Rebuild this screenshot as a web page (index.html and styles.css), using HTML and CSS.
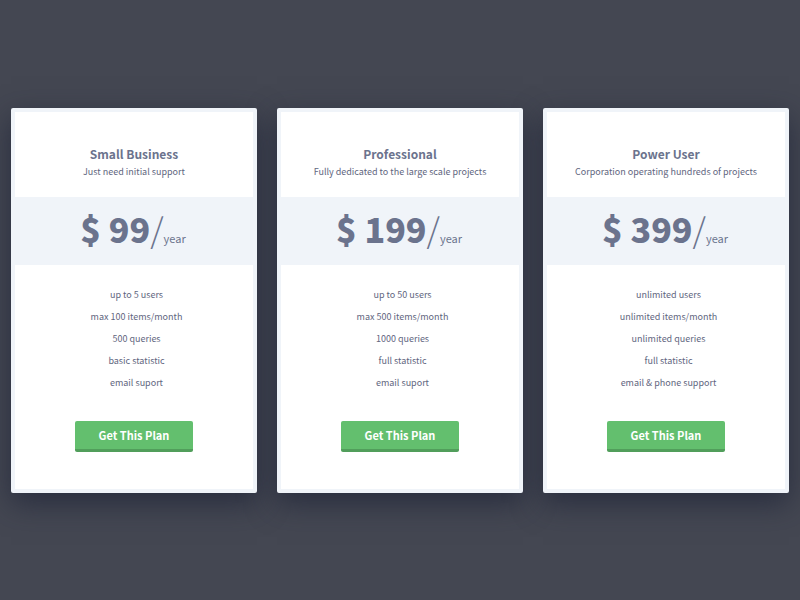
FILE: index.html
```html
<!DOCTYPE html>
<html lang="en">
<head>
  <meta charset="UTF-8">
  <meta name="viewport" content="width=device-width, initial-scale=1">
  <title>Pricing</title>
  <link rel="stylesheet" href="styles.css">
</head>
<body>
  <main class="pricing">

    <section class="plan">
      <header class="plan-header">
        <h2>Small Business</h2>
        <p>Just need initial support</p>
      </header>
      <div class="plan-price">
        <strong>$ 99</strong><span class="slash">/</span><span class="period">year</span>
      </div>
      <ul class="plan-features">
        <li>up to 5 users</li>
        <li>max 100 items/month</li>
        <li>500 queries</li>
        <li>basic statistic</li>
        <li>email suport</li>
      </ul>
      <button type="button" class="plan-button">Get This Plan</button>
    </section>

    <section class="plan">
      <header class="plan-header">
        <h2>Professional</h2>
        <p>Fully dedicated to the large scale projects</p>
      </header>
      <div class="plan-price">
        <strong>$ 199</strong><span class="slash">/</span><span class="period">year</span>
      </div>
      <ul class="plan-features">
        <li>up to 50 users</li>
        <li>max 500 items/month</li>
        <li>1000 queries</li>
        <li>full statistic</li>
        <li>email suport</li>
      </ul>
      <button type="button" class="plan-button">Get This Plan</button>
    </section>

    <section class="plan">
      <header class="plan-header">
        <h2>Power User</h2>
        <p>Corporation operating hundreds of projects</p>
      </header>
      <div class="plan-price">
        <strong>$ 399</strong><span class="slash">/</span><span class="period">year</span>
      </div>
      <ul class="plan-features">
        <li>unlimited users</li>
        <li>unlimited items/month</li>
        <li>unlimited queries</li>
        <li>full statistic</li>
        <li>email &amp; phone support</li>
      </ul>
      <button type="button" class="plan-button">Get This Plan</button>
    </section>

  </main>
</body>
</html>
```

FILE: styles.css
```css
* {
  box-sizing: border-box;
}

body {
  margin: 0;
  background: #444752;
  color: #6b738d;
  font-family: "Noto Sans CJK SC", "Open Sans", sans-serif;
}

.pricing {
  display: grid;
  grid-template-columns: repeat(3, 1fr);
  gap: 20px;
  align-content: center;
  min-height: 100vh;
  padding: 1px 11px 0;
  isolation: isolate;
}

.plan {
  position: relative;
  display: flex;
  flex-direction: column;
  padding-bottom: 37px;
  background: #fff;
  border: 4px solid #f0f4f9;
  border-radius: 2px;
  text-align: center;
}

/* shadow sits behind all cards so it never darkens a neighbour */
.plan::before {
  content: "";
  position: absolute;
  inset: 0;
  z-index: -1;
  box-shadow: 0 10px 28px 4px rgba(28, 34, 54, 0.7);
}

/* plan name */
.plan-header {
  padding: 33px 0 17px;
}

.plan-header h2 {
  margin: 0 0 1px;
  font-size: 12px;
  line-height: 18px;
}

.plan-header p {
  margin: 0;
  color: #5f6680;
  font-size: 9px;
  line-height: 16px;
}

/* price band */
.plan-price {
  display: flex;
  justify-content: center;
  align-items: baseline;
  height: 68px;
  padding-right: 2px;
  background: #f0f4f9;
  line-height: 64px;
}

.plan-price strong {
  font-size: 34px;
  font-weight: 900;
}

.plan-price .slash {
  font-size: 34px;
  font-weight: 300;
}

.plan-price .period {
  font-size: 11px;
}

/* features */
.plan-features {
  margin: 0;
  padding: 19px 0 27px 5px;
  color: #5f6680;
  list-style: none;
  font-size: 9px;
  line-height: 22px;
}

.plan-button {
  align-self: center;
  width: 118px;
  height: 31px;
  padding: 0 0 1px;
  border: 0;
  border-bottom: 3px solid #519e5b;
  border-radius: 2px;
  background: #63bf6e;
  color: #fff;
  font-family: inherit;
  font-size: 11px;
  font-weight: bold;
  cursor: pointer;
}

.plan-button:hover {
  background: #6fcb7a;
}
```
